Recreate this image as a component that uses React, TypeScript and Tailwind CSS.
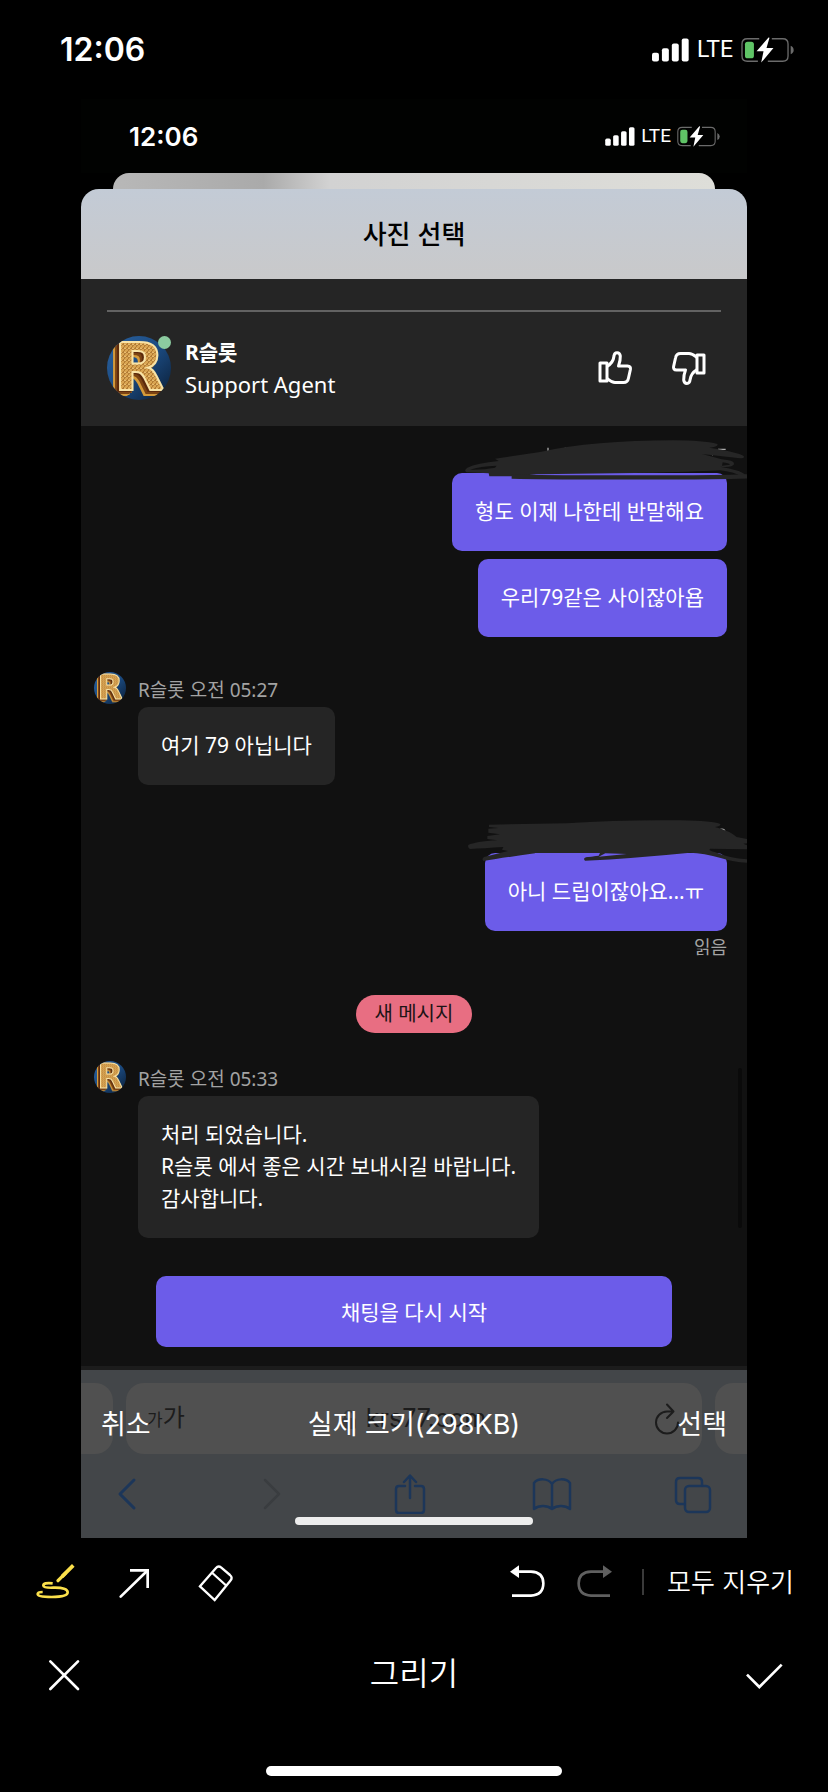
import type { ReactNode } from "react";
import clsx from "clsx";

function StatusIcons({ small }: { small?: boolean }) {
  return (
    <div className={clsx("flex items-center", small ? "gap-1.5" : "gap-2")}>
      <svg
        viewBox="189 37 112 72"
        className={small ? "h-[19px] w-[30px]" : "h-6 w-[37px]"}
        fill="#fff"
        aria-hidden
      >
        <rect x="189" y="81" width="21" height="27" rx="6" />
        <rect x="219" y="68" width="21" height="40" rx="6" />
        <rect x="249" y="53" width="21" height="55" rx="6" />
        <rect x="279" y="38" width="21" height="70" rx="6" />
      </svg>
      <span
        className={clsx(
          "font-['Roboto',sans-serif] leading-6",
          small ? "text-[19px]" : "text-[23px]",
        )}
      >
        LTE
      </span>
      <svg
        viewBox="453 34 160 78"
        className={small ? "h-[21px] w-[43px]" : "h-[26px] w-[53px]"}
        fill="none"
        aria-hidden
      >
        <path
          d="M508 39 H472 Q456 39 456 55 V91 Q456 107 472 107 H504 M546 39 H579 Q595 39 595 55 V91 Q595 107 579 107 H534"
          stroke="#6b6b6b"
          strokeWidth="4"
        />
        <path d="M603 60 Q612 64 612 73 Q612 82 603 86 Z" fill="#6b6b6b" />
        <rect x="465" y="48" width="27" height="50" rx="8" fill="#5fc466" />
        <path d="M536 35 L500 77 H521 L514 111 L551 67 H530 L539 36 Z" fill="#fff" />
      </svg>
    </div>
  );
}

function Avatar({ className }: { className?: string }) {
  return (
    <svg
      viewBox="0 0 64 64"
      className={clsx("shrink-0 rounded-full", className)}
      role="img"
      aria-label="R슬롯"
    >
      <defs>
        <linearGradient id="avatar-bg" x1="0" y1="0" x2="1" y2="1">
          <stop offset="0" stopColor="#2a62a0" />
          <stop offset="0.5" stopColor="#1b4a80" />
          <stop offset="1" stopColor="#0a1c33" />
        </linearGradient>
        <pattern id="avatar-face" width="4" height="4" patternUnits="userSpaceOnUse">
          <rect width="4" height="4" fill="#d9a552" />
          <path d="M0 0 L2 2 L4 0 M0 4 L2 2" stroke="#a8702c" strokeWidth="0.8" fill="none" />
          <circle cx="2" cy="0.5" r="0.8" fill="#eec67a" />
        </pattern>
      </defs>
      <rect width="64" height="64" fill="url(#avatar-bg)" />
      <text
        x="7"
        y="54"
        fontSize="66"
        fontWeight="700"
        fill="url(#avatar-face)"
        stroke="#f8e3a6"
        strokeWidth="2"
        className="font-['DejaVu_Sans',sans-serif] [filter:drop-shadow(-2px_1px_0_#5c2a0c)_drop-shadow(-2px_2px_0_#7c4414)_drop-shadow(-2px_2px_0_#d49a3a)]"
      >
        R
      </text>
    </svg>
  );
}

function ThumbIcon({ down }: { down?: boolean }) {
  return (
    <svg
      viewBox="0 0 36 36"
      className={clsx("size-9", down && "rotate-180")}
      fill="none"
      stroke="#fff"
      strokeWidth="3"
      strokeLinejoin="round"
      aria-hidden
    >
      <path d="M3 13 H10 V31 H3 Z" />
      <path d="M10 16.5 C14 14 16.5 10.5 17 6 C17.3 1.5 22.8 1.5 23.3 6 C23.5 10 22.8 12.5 21.5 16 H30.5 C33 16 33.8 17.5 33.4 19.5 L31.5 28 C31 31 29.5 32.5 26.5 32.5 H18 C14.5 32.5 12.5 30.5 10 28.5" />
    </svg>
  );
}

const firstScribble = (
  <>
    <path d="M384 84 V96 M436 84 V90 M894 89 H917 M876 106 L880 103" stroke="#aaa" strokeWidth="4" />
    <path
      d="M225 117 L360 97 Q520 62 760 62 Q850 62 892 73 Q897 80 868 84 Q940 94 970 108 Q977 116 960 116 L846 103 L905 119 Q945 122 942 134 Q938 144 900 141 Q960 150 981 168 L968 172 Q940 156 900 152 Q860 155 700 159 L350 164 L290 170 H208 L206 161 L140 158 Q130 152 142 144 Q170 130 236 124 Z"
      fill="#262626"
    />
    <path d="M275 171 Q400 174 700 173 Q860 174 981 170" stroke="#262626" strokeWidth="13" />
    <path d="M150 150 Q180 139 230 138 L225 144 Q190 151 150 150 Z" fill="#111" />
    <path d="M908 128 Q926 130 930 135 L906 138 Z" fill="#111" />
  </>
);

const secondScribble = (
  <>
    <path d="M897 92 Q905 86 912 90 Q917 95 915 102" stroke="#aaa" strokeWidth="4" />
    <path
      d="M207 75 Q330 73 440 71 Q600 60 780 62 Q880 64 901 73 Q903 79 885 82 Q930 94 950 112 L981 118 V131 L970 132 L981 137 V149 L870 147 Q864 152 884 157 Q930 176 981 179 V189 Q940 188 905 176 Q850 160 810 159 Q640 176 495 183 Q488 176 498 173 L530 168 L345 161 Q250 174 190 184 Q184 178 192 172 L264 154 L246 150 L250 142 Q190 146 150 148 Q142 144 145 136 Q165 126 232 122 L202 118 V109 L240 104 L205 99 V87 L236 85 L207 82 Z"
      fill="#262626"
    />
    <path d="M345 160 H540 L536 168 L498 172 L345 166 Z M556 161 L620 163 L536 171 Z" fill="#6c5ce9" />
  </>
);

/** Pen strokes laid over the timestamp above a sent message. */
function Scribble({ children }: { children: ReactNode }) {
  return (
    <svg
      viewBox="120 40 861 159"
      className="pointer-events-none absolute -top-10 right-0 h-[53px] w-[287px]"
      fill="none"
      aria-hidden
    >
      {children}
    </svg>
  );
}

function Bubble({ sent, children }: { sent?: boolean; children: ReactNode }) {
  return (
    <div
      className={clsx(
        "w-fit rounded-[10px] px-[23px] pt-[22px] pb-6 text-[21px] leading-8 whitespace-pre-line",
        sent ? "ml-auto mr-5 bg-[#6c5ce9]" : "ml-[57px] bg-[#252525]",
      )}
    >
      {children}
    </div>
  );
}

function AgentMessage({ time, children }: { time: string; children: ReactNode }) {
  return (
    <div>
      <div className="flex h-[35px] items-start gap-3 pl-[13px]">
        <Avatar className="size-8" />
        <span className="pt-0.5 text-[19px] leading-8 text-[#a3a3a3]">R슬롯 오전 {time}</span>
      </div>
      <Bubble>{children}</Bubble>
    </div>
  );
}

function NavIcon({ label, disabled, children }: { label: string; disabled?: boolean; children: ReactNode }) {
  return (
    <button type="button" aria-label={label} disabled={disabled}>
      <svg
        viewBox="0 0 40 40"
        className={clsx("size-10", disabled ? "text-[#3a3d40]" : "text-[#1c3659]")}
        fill="none"
        stroke="currentColor"
        strokeWidth="2.5"
        strokeLinecap="round"
        strokeLinejoin="round"
      >
        {children}
      </svg>
    </button>
  );
}

function BrowserBar() {
  return (
    <div className="relative bg-[#434649] pt-[13px] pb-1">
      <div className="flex h-[71px] gap-[13px]">
        <div className="w-8 rounded-r-[18px] bg-[#505050]" />
        <div className="relative flex flex-1 items-center justify-between rounded-[18px] bg-[#505050] pr-5 pl-[21px] text-[#1c1c1c]">
          <span className="flex items-baseline text-[24px] leading-8">
            <span className="text-[17px]">가</span>가
          </span>
          <span className="absolute inset-x-0 flex items-center justify-center gap-2.5 text-[25px]">
            <svg viewBox="0 0 14 20" className="h-5 w-3.5" fill="#3a3a3a" aria-hidden>
              <path d="M3 9 V6 A4 4 0 0 1 11 6 V9" fill="none" stroke="#3a3a3a" strokeWidth="2" />
              <rect y="9" width="14" height="11" rx="2" />
            </svg>
            krs77.com
          </span>
          <svg
            viewBox="0 0 28 34"
            className="h-[34px] w-7"
            fill="none"
            stroke="currentColor"
            strokeWidth="2"
            strokeLinecap="round"
            strokeLinejoin="round"
            aria-hidden
          >
            <path d="M19.5 9.5 H13 A11 11 0 1 0 24 20.5 M13 2.5 L19.5 9.5 L13 16" />
          </svg>
        </div>
        <div className="w-8 rounded-l-[18px] bg-[#505050]" />
      </div>

      <nav className="flex h-20 items-center justify-between pr-[34px] pl-[26px]">
        <NavIcon label="뒤로">
          <path d="M27 6 L13 20 L27 34" strokeWidth="3" />
        </NavIcon>
        <NavIcon label="앞으로" disabled>
          <path d="M16 6 L30 20 L16 34" />
        </NavIcon>
        <NavIcon label="공유">
          <path d="M15 12 H9 Q6 12 6 15 V36 Q6 39 9 39 H31 Q34 39 34 36 V15 Q34 12 31 12 H25 M20 24 V2 M14 8 L20 1.5 L26 8" />
        </NavIcon>
        <NavIcon label="책갈피">
          <path d="M20 10 C16 4 6 4 2 9 V35 C7 31 15 31 20 35 C25 31 33 31 38 35 V9 C34 4 24 4 20 10 Z M20 10 V35" />
        </NavIcon>
        <NavIcon label="탭">
          <rect x="12" y="12" width="25" height="26" rx="4" />
          <path d="M11 30 H7 Q3 30 3 26 V8 Q3 4 7 4 H25 Q29 4 29 8 V11" />
        </NavIcon>
      </nav>

      <div className="absolute inset-x-0 bottom-[13px] mx-auto h-2 w-[238px] rounded-full bg-[#ededed]" />

      {/* picker actions float over the dimmed browser bar */}
      <div className="absolute inset-x-0 top-0 flex h-[110px] items-center justify-between px-5 text-[27px]">
        <button type="button">취소</button>
        <span>실제 크기(298KB)</span>
        <button type="button">선택</button>
      </div>
    </div>
  );
}

function Tool({
  label,
  viewBox,
  className,
  children,
}: {
  label: string;
  viewBox: string;
  className?: string;
  children: ReactNode;
}) {
  return (
    <button type="button" aria-label={label} className={clsx("shrink-0", className)}>
      <svg viewBox={viewBox} className="size-10" fill="none" stroke="currentColor" strokeWidth="8">
        {children}
      </svg>
    </button>
  );
}

const curvedArrow = (
  <>
    <path d="M285 95 L312 76 V114 Z" fill="currentColor" stroke="none" />
    <path d="M311 95 H348 Q385 97 385 130 Q385 165 348 167 H291" />
  </>
);

export default function App() {
  return (
    <div className="flex min-h-screen flex-col bg-black font-['Inter','Noto_Sans_CJK_KR',sans-serif] text-white">
      <header className="flex h-[99px] items-center justify-between pr-[34px] pl-[60px]">
        <span className="text-[32px] font-semibold">12:06</span>
        <StatusIcons />
      </header>

      <main className="px-[81px]">
        <div className="flex h-[74px] items-center justify-between bg-[#010201] pr-[27px] pl-12">
          <span className="text-[26px] font-semibold">12:06</span>
          <StatusIcons small />
        </div>
        <div className="mx-8 h-4 rounded-t-2xl bg-[linear-gradient(90deg,#b8b8b8,#aaaaaa_25%,#d2d2d2_36%,#deded9)]" />

        <section className="overflow-hidden rounded-t-[18px] bg-[#111]">
          <h1 className="flex h-[90px] items-center justify-center bg-linear-to-b from-[#c3cbd6] to-[#c9c9ca] text-[26px] font-medium text-black">
            사진 선택
          </h1>

          <div className="bg-[#252525] px-[26px] pt-[31px] pb-[26px] font-['Noto_Sans','Noto_Sans_CJK_KR',sans-serif]">
            <hr className="border-t-2 border-[#626262]" />
            <div className="flex items-center pt-6">
              <div className="relative">
                <Avatar className="size-16" />
                <span className="absolute top-0 right-0 size-[13px] rounded-full bg-[#8ccba0]" />
              </div>
              <div className="flex-1 pl-3.5 text-[22px] leading-8">
                <p className="text-[21px] font-bold">R슬롯</p>
                <p>Support Agent</p>
              </div>
              <div className="flex gap-[38px] pr-3.5">
                <button type="button" aria-label="좋아요">
                  <ThumbIcon />
                </button>
                <button type="button" aria-label="싫어요">
                  <ThumbIcon down />
                </button>
              </div>
            </div>
          </div>

          <div className="relative border-b-4 border-[#1c1c1c] pt-[47px] pb-[19px] font-['Noto_Sans','Noto_Sans_CJK_KR',sans-serif]">
            <div className="relative flex flex-col gap-2">
              <Bubble sent>형도 이제 나한테 반말해요</Bubble>
              <Bubble sent>우리79같은 사이잖아욥</Bubble>
              <Scribble>{firstScribble}</Scribble>
            </div>

            <div className="pt-[35px]">
              <AgentMessage time="05:27">여기 79 아닙니다</AgentMessage>
            </div>

            <div className="relative mt-[68px]">
              <Bubble sent>아니 드립이잖아요...ㅠ</Bubble>
              <p className="pr-5 text-right text-[18px] leading-8 text-[#a3a3a3]">읽음</p>
              <Scribble>{secondScribble}</Scribble>
            </div>

            <p className="mx-auto mt-8 w-fit rounded-full bg-[#e86e82] px-[19px] py-[3px] text-[20px] leading-8 text-[#1c1416]">
              새 메시지
            </p>

            <div className="pt-7">
              <AgentMessage time="05:33">
                {"처리 되었습니다.\nR슬롯 에서 좋은 시간 보내시길 바랍니다.\n감사합니다."}
              </AgentMessage>
            </div>

            <div className="px-[75px] pt-[38px]">
              <button
                type="button"
                className="h-[71px] w-full rounded-[10px] bg-[#6c5ce9] text-[21px] leading-8"
              >
                채팅을 다시 시작
              </button>
            </div>

            <div className="absolute right-[5px] bottom-[138px] h-40 w-1 rounded-full bg-[#0a0a0a]" />
          </div>

          <BrowserBar />
        </section>
      </main>

      <footer>
        <div className="flex h-[88px] items-center pr-[34px] pl-[35px]">
          <div className="flex flex-1 gap-10">
            <Tool label="펜" viewBox="105 66 120 120" className="text-[#fbe04b]">
              <path d="M216 80 L190 106" strokeWidth="11" strokeLinecap="square" />
              <path d="M196 100 L174 122" strokeWidth="10" strokeLinecap="round" />
              <path
                d="M158 130 Q130 127 130 137 Q131 144 160 143 Q203 142 203 157 Q203 171 155 171 Q113 171 113 162 Q113 156 128 156"
                strokeWidth="8"
              />
            </Tool>
            <Tool label="화살표" viewBox="345 66 120 120">
              <path d="M362 170 L441 93" strokeLinecap="round" />
              <path d="M390 91 H443 V144" />
            </Tool>
            <Tool label="지우개" viewBox="585 66 120 120">
              <path
                d="M600 139 L648 84 Q655 76 664 83 L690 105 Q699 113 691 122 L644 180 Z M637 99 L680 138"
                strokeWidth="7"
              />
            </Tool>
          </div>
          <Tool label="실행 취소" viewBox="279 66 120 120">
            {curvedArrow}
          </Tool>
          <Tool label="다시 실행" viewBox="279 66 120 120" className="ml-[26px] -scale-x-100 text-[#606060]">
            {curvedArrow}
          </Tool>
          <div className="ml-7 h-[26px] w-0.5 bg-[#3a3a3a]" />
          <button type="button" className="ml-[23px] text-[26px] font-[350]">
            모두 지우기
          </button>
        </div>

        <div className="flex h-24 items-center justify-between px-11">
          <Tool label="닫기" viewBox="132 342 120 120">
            <path d="M151 364 L234 447 M234 364 L151 447" strokeLinecap="round" />
          </Tool>
          <h2 className="text-[32px] font-[350]">그리기</h2>
          <Tool label="완료" viewBox="987 342 120 120">
            <path d="M996 404 L1033 441 L1100 374" />
          </Tool>
        </div>

        <div className="mx-auto mt-11 mb-4 h-2.5 w-[296px] rounded-full bg-white" />
      </footer>
    </div>
  );
}
